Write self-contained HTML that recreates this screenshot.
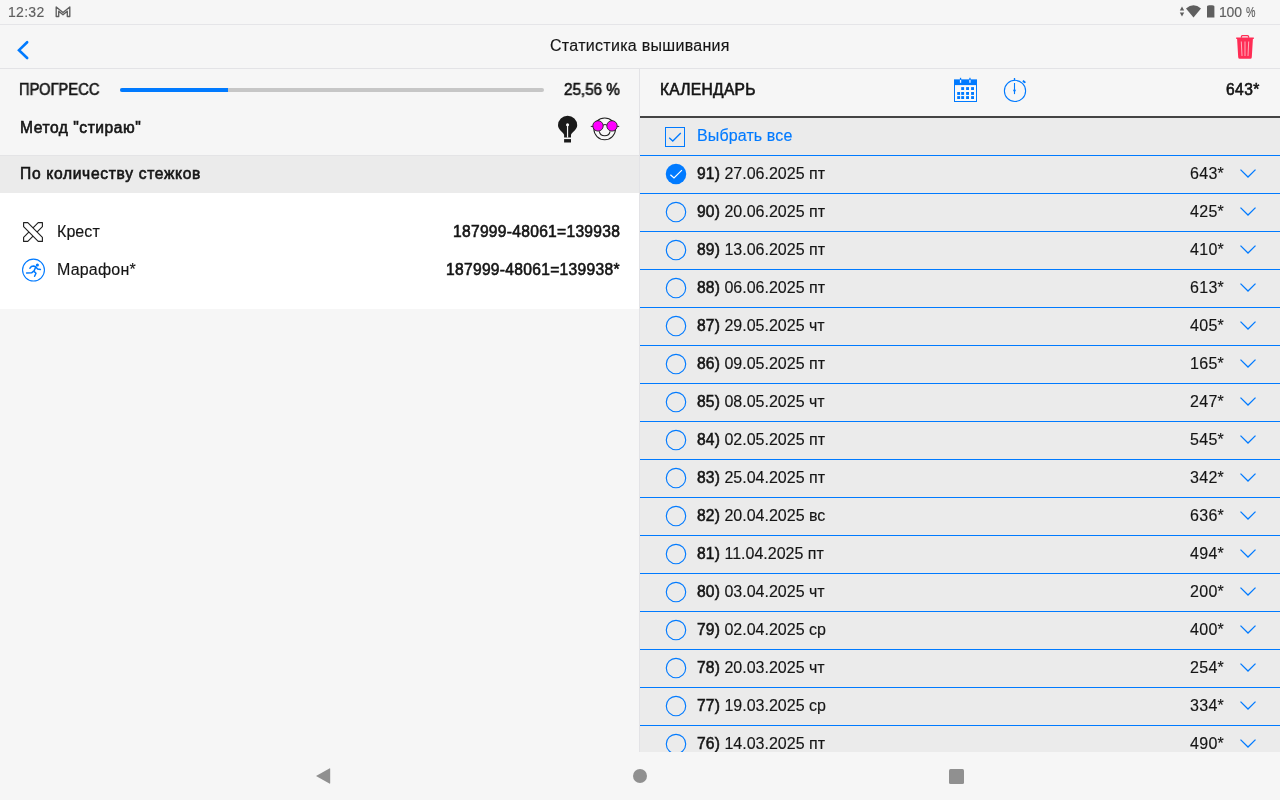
<!DOCTYPE html>
<html lang="ru">
<head>
<meta charset="utf-8">
<title>Статистика вышивания</title>
<style>
*{box-sizing:border-box;margin:0;padding:0}
html,body{width:1280px;height:800px;overflow:hidden;background:#f6f6f6}
body{font-family:"Liberation Sans",sans-serif;color:#151515;font-size:16px;position:relative;-webkit-text-stroke:0.15px currentColor}
.abs{position:absolute;white-space:nowrap;line-height:20px}
.med{font-weight:400;font-size:15.6px;-webkit-text-stroke:0.6px currentColor}
.abs,.lbl,.val{will-change:transform}
.sx{display:inline-block;transform-origin:0 50%}
.sxr{display:inline-block;transform-origin:100% 50%}
#status{position:absolute;left:0;top:0;width:1280px;height:25px;border-bottom:1px solid #e5e5e8;color:#5f5f5f;font-size:14px}
#appbar{position:absolute;left:0;top:25px;width:1280px;height:44px;border-bottom:1px solid #e3e3e6}
#left{position:absolute;left:0;top:69px;width:640px;height:683px;border-right:1px solid #e3e3e6}
#right{position:absolute;left:640px;top:69px;width:640px;height:683px;overflow:hidden}
#sechead{position:absolute;left:0;top:86px;width:639px;height:38px;background:#ebebeb;border-top:1px solid #e4e4e6}
#white{position:absolute;left:0;top:124px;width:639px;height:116px;background:#fff}
#rhead{position:absolute;left:0;top:0;width:640px;height:49px;border-bottom:2px solid #444}
#list{position:absolute;left:0;top:49px;width:640px;height:640px;background:#ebebeb}
.row{position:relative;height:38px;border-bottom:1px solid #007aff}
.radio{position:absolute;left:23.7px;top:5.9px;width:24px;height:24px}
.lbl{position:absolute;left:57px;top:8px;line-height:20px;white-space:nowrap}
.lbl b{font-weight:400;font-size:15.6px;letter-spacing:0.15px;-webkit-text-stroke:0.55px currentColor}
.val{position:absolute;right:55.7px;top:8px;line-height:20px;white-space:nowrap;letter-spacing:0.3px}
.chev{position:absolute;left:600px;top:13.2px;width:16px;height:9px}
#nav{position:absolute;left:0;top:752px;width:1280px;height:48px;background:#f6f6f6}
#t_time{left:8.00px;top:2px;letter-spacing:0.295px}
#t_batt{left:1219.00px;top:2px;letter-spacing:-0.200px}
#t_title{left:550.00px;top:11px;letter-spacing:0.293px}
#t_prog{left:19.00px;top:11px;letter-spacing:0.000px;transform:scaleX(0.9439);transform-origin:0 50%}
#t_pct{left:564.00px;top:11px;letter-spacing:0.000px;transform:scaleX(0.9770);transform-origin:0 50%}
#t_method{left:20.00px;top:49px;letter-spacing:0.534px}
#t_sec{left:20.00px;top:8px;letter-spacing:0.680px}
#t_krest{left:57.00px;top:29px;letter-spacing:0.074px}
#t_num1{left:453.00px;top:29px;letter-spacing:0.288px}
#t_mar{left:57.00px;top:67px;letter-spacing:0.188px}
#t_num2{left:446.00px;top:67px;letter-spacing:0.301px}
#t_cal{left:20.00px;top:11px;letter-spacing:0.268px}
#t_tot{left:586.00px;top:11px;letter-spacing:0.435px}
</style>
</head>
<body>
<div id="status">
  <span class="abs" id="t_time">12:32</span>
  <svg style="position:absolute;left:54px;top:5px;width:18px;height:14px" viewBox="0 0 18 14"><path d="M2.2 11.5 V2 L9 7.6 L15.8 2 V11.5 H13.3 V6.2 L9 9.8 L4.7 6.2 V11.5 Z" fill="none" stroke="#5f5f5f" stroke-width="1.35" stroke-linejoin="round"/></svg>
  <svg style="position:absolute;left:1178px;top:4px;width:40px;height:16px" viewBox="0 0 40 16"><path d="M1.8 6.6 L4 2.6 L6.2 6.6 Z M1.8 8.6 L4 12.6 L6.2 8.6 Z" fill="#5f5f5f"/><path d="M8 4.6 Q15.5 -2.2 23 4.6 L15.5 13.5 Z" fill="#5f5f5f"/><path d="M29 2.6 Q29 1.6 30.4 1.5 L31 1.2 H34.4 L35 1.5 Q36.4 1.6 36.4 2.6 V13.4 H29 Z" fill="#5f5f5f"/></svg>
  <span class="abs" id="t_batt">100<span style="display:inline-block;transform:scaleX(0.76);transform-origin:0 50%;margin-left:4.6px">%</span></span>
</div>
<div id="appbar">
  <svg style="position:absolute;left:15px;top:14px;width:16px;height:22px" viewBox="0 0 16 22"><path d="M12.15 3.25 L4 11.15 L12.15 19.05" fill="none" stroke="#007aff" stroke-width="2.6" stroke-linecap="round"/></svg>
  <span class="abs" id="t_title">Статистика вышивания</span>
  <svg style="position:absolute;left:1235px;top:9px;width:20px;height:26px" viewBox="0 0 20 26"><path d="M6.4 3.8 V2.7 Q6.4 1.7 7.4 1.7 H12.6 Q13.6 1.7 13.6 2.7 V3.8" fill="none" stroke="#ff2d55" stroke-width="1.3"/><path d="M1.2 3.6 H18.8 V5 H17.9 L16.8 23.2 Q16.7 24.8 15.2 24.8 H4.8 Q3.3 24.8 3.2 23.2 L2.1 5 H1.2 Z" fill="#ff2d55"/><path d="M6.3 7.5 L7 22 M10 7.5 V22 M13.7 7.5 L13 22" stroke="#ffd0d8" stroke-width="0.8" fill="none"/></svg>
</div>
<div id="left">
  <span class="abs med" id="t_prog">ПРОГРЕСС</span>
  <div style="position:absolute;left:120px;top:19px;width:424px;height:4px;border-radius:2px;background:#c6c6c6"></div>
  <div style="position:absolute;left:120px;top:19px;width:108px;height:4px;border-radius:2px 0 0 2px;background:#007aff"></div>
  <span class="abs med" id="t_pct">25,56 %</span>
  <span class="abs med" id="t_method">Метод "стираю"</span>
  <svg style="position:absolute;left:550px;top:41px;width:80px;height:40px" viewBox="550 110 80 40"><path d="M567.6 115.7 A9.6 9.6 0 0 1 577.2 125.3 C577.2 129.6 572.6 131.6 571 134.8 V137.6 H564.1 V134.8 C562.5 131.6 558 129.6 558 125.3 A9.6 9.6 0 0 1 567.6 115.7 Z" fill="#1a1a1a"/><rect x="564.1" y="139.1" width="6.9" height="3.4" fill="#1a1a1a"/><path d="M567.55 125 V137.6" stroke="#f6f6f6" stroke-width="1.2"/><circle cx="567.55" cy="124.7" r="1.55" fill="#f6f6f6"/><circle cx="604.7" cy="128.85" r="10.85" fill="#f8f8f8" stroke="#222" stroke-width="1.05"/><path d="M599.3 131.3 A5.5 5.5 0 0 0 610.1 131.3" fill="none" stroke="#222" stroke-width="1.05"/><path d="M590.8 126.4 H593.2 M616.8 126.4 H619.2" stroke="#222" stroke-width="1"/><path d="M602.8 125.2 Q605 123.8 607.2 125.2" fill="none" stroke="#222" stroke-width="1"/><circle cx="598" cy="125.9" r="5.2" fill="#ff00ff" stroke="#222" stroke-width="0.9"/><circle cx="612" cy="125.9" r="5.2" fill="#ff00ff" stroke="#222" stroke-width="0.9"/></svg>
  <div id="sechead"><span class="abs med" id="t_sec">По количеству стежков</span></div>
  <div id="white">
    <svg style="position:absolute;left:16px;top:22px;width:40px;height:70px" viewBox="16 215 40 70"><g fill="#fff" stroke="#222" stroke-width="1.15" stroke-linejoin="round"><path d="M42.4 222.6 H38.2 L23.6 237.4 V241.4 H27.8 L42.4 226.6 Z"/><path d="M23.6 222.6 H27.8 L42.4 237.4 V241.4 H38.2 L23.6 226.6 Z"/></g><circle cx="33.5" cy="270.05" r="10.95" fill="none" stroke="#007aff" stroke-width="1.1"/><circle cx="37.4" cy="265" r="1.55" fill="#007aff"/><path d="M31.3 266.6 L33.6 266 L35.8 266.8 L33.9 271.4 M35.8 267 L37.6 269.1 L40.4 269.5 M34 271.4 L36 273.2 L34.6 276.2 M33.6 271.2 L31.6 272.8 L26.6 272.9 M31.4 266.6 L29.9 268.2" fill="none" stroke="#007aff" stroke-width="1.5" stroke-linecap="round" stroke-linejoin="round"/></svg>
    <span class="abs" id="t_krest">Крест</span>
    <span class="abs med" id="t_num1">187999-48061=139938</span>
    <span class="abs" id="t_mar">Марафон*</span>
    <span class="abs med" id="t_num2">187999-48061=139938*</span>
  </div>
</div>
<div id="right">
  <div id="rhead">
    <span class="abs med" id="t_cal">КАЛЕНДАРЬ</span>
    <svg style="position:absolute;left:310px;top:6px;width:30px;height:30px" viewBox="950 75 30 30"><rect x="954.5" y="80.1" width="22" height="21.4" fill="#f9f9f9" stroke="#007aff" stroke-width="1"/><rect x="954" y="79.6" width="23" height="5.5" fill="#007aff"/><rect x="959.9" y="77.8" width="1.3" height="2.2" fill="#007aff"/><rect x="969.3" y="77.8" width="1.3" height="2.2" fill="#007aff"/><rect x="959.9" y="79.9" width="1.3" height="2.9" fill="#eaf2ff"/><rect x="969.3" y="79.9" width="1.3" height="2.9" fill="#eaf2ff"/><g fill="#007aff"><rect x="961.2" y="87.1" width="2.9" height="2.9"/><rect x="966.1" y="87.1" width="2.9" height="2.9"/><rect x="971.1" y="87.1" width="2.9" height="2.9"/><rect x="957.2" y="92.0" width="2.9" height="2.9"/><rect x="961.2" y="92.0" width="2.9" height="2.9"/><rect x="966.1" y="92.0" width="2.9" height="2.9"/><rect x="971.1" y="92.0" width="2.9" height="2.9"/><rect x="957.2" y="96.1" width="2.9" height="2.9"/><rect x="961.2" y="96.1" width="2.9" height="2.9"/><rect x="966.1" y="96.1" width="2.9" height="2.9"/><rect x="971.1" y="96.1" width="2.9" height="2.9"/></g></svg>
    <svg style="position:absolute;left:360px;top:6px;width:30px;height:30px" viewBox="1000 75 30 30"><circle cx="1015" cy="90.9" r="10.6" fill="none" stroke="#007aff" stroke-width="1.1"/><path d="M1014.5 78 V80.4" stroke="#007aff" stroke-width="1.3"/><path d="M1022.3 81.3 L1023.6 79.9 L1026.1 82.3 L1024.2 83.2 Z" fill="#007aff"/><path d="M1014.5 83 V94.1" stroke="#007aff" stroke-width="1.1"/><path d="M1012.9 89.8 H1016.1 L1014.5 92.8 Z" fill="#007aff"/></svg>
    <span class="abs med" id="t_tot">643*</span>
  </div>
  <div id="list">
    <div class="row" style="height:38px"><span style="position:absolute;left:25px;top:9px;width:20px;height:20px;border:1px solid #007aff"><svg style="position:absolute;left:-1px;top:-1px;width:20px;height:20px" viewBox="0 0 20 20"><path d="M4.2 10.7 L7.8 14 L15.8 6" fill="none" stroke="#007aff" stroke-width="1.3"/></svg></span><span class="lbl" style="color:#007aff;top:8px;letter-spacing:0.12px">Выбрать все</span></div>
<div class="row"><svg class="radio" viewBox="0 0 24 24"><circle cx="12" cy="12" r="10.25" fill="#007aff"/><path d="M6.4 12.7 L10 16 L17.9 8.1" fill="none" stroke="#fff" stroke-width="1.2"/></svg><span class="lbl"><b>91)</b> 27.06.2025 пт</span><span class="val">643*</span><svg class="chev" viewBox="0 0 16 9"><path d="M0.5 0.6 L8 8 L15.5 0.6" fill="none" stroke="#007aff" stroke-width="1.3"/></svg></div>
<div class="row"><svg class="radio" viewBox="0 0 24 24"><circle cx="12" cy="12" r="9.7" fill="none" stroke="#007aff" stroke-width="1.15"/></svg><span class="lbl"><b>90)</b> 20.06.2025 пт</span><span class="val">425*</span><svg class="chev" viewBox="0 0 16 9"><path d="M0.5 0.6 L8 8 L15.5 0.6" fill="none" stroke="#007aff" stroke-width="1.3"/></svg></div>
<div class="row"><svg class="radio" viewBox="0 0 24 24"><circle cx="12" cy="12" r="9.7" fill="none" stroke="#007aff" stroke-width="1.15"/></svg><span class="lbl"><b>89)</b> 13.06.2025 пт</span><span class="val">410*</span><svg class="chev" viewBox="0 0 16 9"><path d="M0.5 0.6 L8 8 L15.5 0.6" fill="none" stroke="#007aff" stroke-width="1.3"/></svg></div>
<div class="row"><svg class="radio" viewBox="0 0 24 24"><circle cx="12" cy="12" r="9.7" fill="none" stroke="#007aff" stroke-width="1.15"/></svg><span class="lbl"><b>88)</b> 06.06.2025 пт</span><span class="val">613*</span><svg class="chev" viewBox="0 0 16 9"><path d="M0.5 0.6 L8 8 L15.5 0.6" fill="none" stroke="#007aff" stroke-width="1.3"/></svg></div>
<div class="row"><svg class="radio" viewBox="0 0 24 24"><circle cx="12" cy="12" r="9.7" fill="none" stroke="#007aff" stroke-width="1.15"/></svg><span class="lbl"><b>87)</b> 29.05.2025 чт</span><span class="val">405*</span><svg class="chev" viewBox="0 0 16 9"><path d="M0.5 0.6 L8 8 L15.5 0.6" fill="none" stroke="#007aff" stroke-width="1.3"/></svg></div>
<div class="row"><svg class="radio" viewBox="0 0 24 24"><circle cx="12" cy="12" r="9.7" fill="none" stroke="#007aff" stroke-width="1.15"/></svg><span class="lbl"><b>86)</b> 09.05.2025 пт</span><span class="val">165*</span><svg class="chev" viewBox="0 0 16 9"><path d="M0.5 0.6 L8 8 L15.5 0.6" fill="none" stroke="#007aff" stroke-width="1.3"/></svg></div>
<div class="row"><svg class="radio" viewBox="0 0 24 24"><circle cx="12" cy="12" r="9.7" fill="none" stroke="#007aff" stroke-width="1.15"/></svg><span class="lbl"><b>85)</b> 08.05.2025 чт</span><span class="val">247*</span><svg class="chev" viewBox="0 0 16 9"><path d="M0.5 0.6 L8 8 L15.5 0.6" fill="none" stroke="#007aff" stroke-width="1.3"/></svg></div>
<div class="row"><svg class="radio" viewBox="0 0 24 24"><circle cx="12" cy="12" r="9.7" fill="none" stroke="#007aff" stroke-width="1.15"/></svg><span class="lbl"><b>84)</b> 02.05.2025 пт</span><span class="val">545*</span><svg class="chev" viewBox="0 0 16 9"><path d="M0.5 0.6 L8 8 L15.5 0.6" fill="none" stroke="#007aff" stroke-width="1.3"/></svg></div>
<div class="row"><svg class="radio" viewBox="0 0 24 24"><circle cx="12" cy="12" r="9.7" fill="none" stroke="#007aff" stroke-width="1.15"/></svg><span class="lbl"><b>83)</b> 25.04.2025 пт</span><span class="val">342*</span><svg class="chev" viewBox="0 0 16 9"><path d="M0.5 0.6 L8 8 L15.5 0.6" fill="none" stroke="#007aff" stroke-width="1.3"/></svg></div>
<div class="row"><svg class="radio" viewBox="0 0 24 24"><circle cx="12" cy="12" r="9.7" fill="none" stroke="#007aff" stroke-width="1.15"/></svg><span class="lbl"><b>82)</b> 20.04.2025 вс</span><span class="val">636*</span><svg class="chev" viewBox="0 0 16 9"><path d="M0.5 0.6 L8 8 L15.5 0.6" fill="none" stroke="#007aff" stroke-width="1.3"/></svg></div>
<div class="row"><svg class="radio" viewBox="0 0 24 24"><circle cx="12" cy="12" r="9.7" fill="none" stroke="#007aff" stroke-width="1.15"/></svg><span class="lbl"><b>81)</b> 11.04.2025 пт</span><span class="val">494*</span><svg class="chev" viewBox="0 0 16 9"><path d="M0.5 0.6 L8 8 L15.5 0.6" fill="none" stroke="#007aff" stroke-width="1.3"/></svg></div>
<div class="row"><svg class="radio" viewBox="0 0 24 24"><circle cx="12" cy="12" r="9.7" fill="none" stroke="#007aff" stroke-width="1.15"/></svg><span class="lbl"><b>80)</b> 03.04.2025 чт</span><span class="val">200*</span><svg class="chev" viewBox="0 0 16 9"><path d="M0.5 0.6 L8 8 L15.5 0.6" fill="none" stroke="#007aff" stroke-width="1.3"/></svg></div>
<div class="row"><svg class="radio" viewBox="0 0 24 24"><circle cx="12" cy="12" r="9.7" fill="none" stroke="#007aff" stroke-width="1.15"/></svg><span class="lbl"><b>79)</b> 02.04.2025 ср</span><span class="val">400*</span><svg class="chev" viewBox="0 0 16 9"><path d="M0.5 0.6 L8 8 L15.5 0.6" fill="none" stroke="#007aff" stroke-width="1.3"/></svg></div>
<div class="row"><svg class="radio" viewBox="0 0 24 24"><circle cx="12" cy="12" r="9.7" fill="none" stroke="#007aff" stroke-width="1.15"/></svg><span class="lbl"><b>78)</b> 20.03.2025 чт</span><span class="val">254*</span><svg class="chev" viewBox="0 0 16 9"><path d="M0.5 0.6 L8 8 L15.5 0.6" fill="none" stroke="#007aff" stroke-width="1.3"/></svg></div>
<div class="row"><svg class="radio" viewBox="0 0 24 24"><circle cx="12" cy="12" r="9.7" fill="none" stroke="#007aff" stroke-width="1.15"/></svg><span class="lbl"><b>77)</b> 19.03.2025 ср</span><span class="val">334*</span><svg class="chev" viewBox="0 0 16 9"><path d="M0.5 0.6 L8 8 L15.5 0.6" fill="none" stroke="#007aff" stroke-width="1.3"/></svg></div>
<div class="row"><svg class="radio" viewBox="0 0 24 24"><circle cx="12" cy="12" r="9.7" fill="none" stroke="#007aff" stroke-width="1.15"/></svg><span class="lbl"><b>76)</b> 14.03.2025 пт</span><span class="val">490*</span><svg class="chev" viewBox="0 0 16 9"><path d="M0.5 0.6 L8 8 L15.5 0.6" fill="none" stroke="#007aff" stroke-width="1.3"/></svg></div>
  </div>
</div>
<div id="nav">
  <svg style="position:absolute;left:314px;top:15px;width:18px;height:18px" viewBox="0 0 18 18"><path d="M2 9 L15.4 1.4 Q16.2 1 16.2 1.9 V16.1 Q16.2 17 15.4 16.6 Z" fill="#909090"/></svg>
  <div style="position:absolute;left:633px;top:17px;width:14px;height:14px;border-radius:50%;background:#909090"></div>
  <div style="position:absolute;left:948.5px;top:16.5px;width:15px;height:15px;border-radius:1.5px;background:#909090"></div>
</div>
</body>
</html>
